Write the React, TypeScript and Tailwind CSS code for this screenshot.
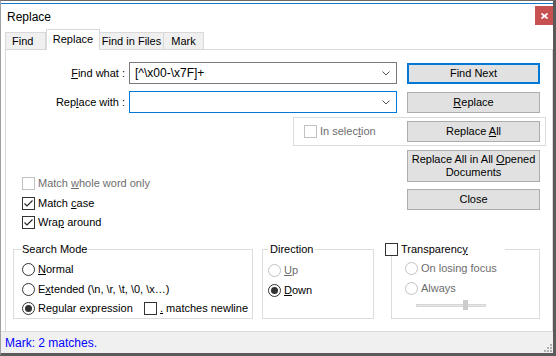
import type { ReactNode } from "react";

function Btn({ children, primary = false, tall = false }: { children: ReactNode; primary?: boolean; tall?: boolean }) {
  return (
    <button
      type="button"
      className={`w-[133px] ${tall ? "h-[32px]" : "h-[21px]"} ${
        primary ? "border-2 border-[#0078d7]" : "border border-[#adadad]"
      } bg-[#e1e1e1] flex items-center justify-center text-center leading-[13px] text-black`}
    >
      <span>{children}</span>
    </button>
  );
}

function Combo({ value = "", focused = false }: { value?: string; focused?: boolean }) {
  return (
    <div
      className={`ml-[4px] w-[268px] h-[22px] border ${
        focused ? "border-[#0078d7]" : "border-[#7a7a7a]"
      } bg-white flex items-center pl-[5px] pr-[6px]`}
    >
      <span className="flex-1 text-[12px] text-black">{value}</span>
      <svg width="8" height="5" viewBox="0 0 8 5">
        <path d="M0.5 0.5 L4 4 L7.5 0.5" fill="none" stroke="#555" strokeWidth="1" />
      </svg>
    </div>
  );
}

function Check({ checked = false, disabled = false, children }: { checked?: boolean; disabled?: boolean; children: ReactNode }) {
  return (
    <span className="flex items-center h-[13px] leading-[13px]">
      <span
        className={`w-[13px] h-[13px] border ${
          disabled ? "border-[#c2c2c2]" : "border-[#333333]"
        } bg-white flex items-center justify-center shrink-0`}
      >
        {checked && (
          <svg width="11" height="11" viewBox="0 0 11 11">
            <path d="M1.5 5.5 L4 8 L9.5 2.5" fill="none" stroke="#222" strokeWidth="1.1" />
          </svg>
        )}
      </span>
      <span className={`ml-[3px] whitespace-nowrap ${disabled ? "text-[#6d6d6d]" : "text-black"}`}>{children}</span>
    </span>
  );
}

function Radio({ checked = false, disabled = false, children }: { checked?: boolean; disabled?: boolean; children: ReactNode }) {
  return (
    <span className="flex items-center h-[13px] leading-[13px]">
      <span
        className={`w-[13px] h-[13px] rounded-full border ${
          disabled ? "border-[#c2c2c2]" : "border-[#333333]"
        } bg-white flex items-center justify-center shrink-0`}
      >
        {checked && <span className="w-[7px] h-[7px] rounded-full bg-[#333333]" />}
      </span>
      <span className={`ml-[3px] whitespace-nowrap ${disabled ? "text-[#6d6d6d]" : "text-black"}`}>{children}</span>
    </span>
  );
}

export default function App() {
  return (
    <div className="w-[556px] h-[356px] flex flex-col bg-white border-t border-l border-t-[#6a6a6a] border-l-[#a0a0a0] border-r-[3px] border-b-[3px] border-r-[#5a5a5a] border-b-[#5a5a5a] font-['Liberation_Sans',Arial,sans-serif] text-[11px] text-black">
      <div className="h-[2px] bg-white" />
      <div className="h-px bg-[#1979ca]" />

      {/* title bar */}
      <div className="h-[25px] flex">
        <span className="flex-1 self-center pl-[6px] text-[12px] leading-[14px]">Replace</span>
        <div className="mt-[2px] w-[18px] h-[19px] bg-[#c75050] flex items-center justify-center">
          <svg width="7" height="6" viewBox="0 0 7 6">
            <path d="M0.5 0.5 L6.5 5.5 M6.5 0.5 L0.5 5.5" stroke="#fff" strokeWidth="1.7" />
          </svg>
        </div>
      </div>

      {/* tabs */}
      <div className="h-[20px] ml-[4px] flex items-end">
        <div className="w-[41px] h-[17px] bg-[#f0f0f0] border border-b-0 border-[#d9d9d9] flex items-center pl-[6px]">Find</div>
        <div className="relative z-10 -mb-px w-[54px] h-[21px] bg-white border border-b-0 border-[#d9d9d9] flex items-center justify-center pb-[2px]">
          Replace
        </div>
        <div className="w-[64px] h-[17px] bg-[#f0f0f0] border border-b-0 border-l-0 border-[#d9d9d9] flex items-center justify-center">
          Find in Files
        </div>
        <div className="w-[40px] h-[17px] bg-[#f0f0f0] border border-b-0 border-l-0 border-[#d9d9d9] flex items-center justify-center">
          Mark
        </div>
      </div>

      {/* panel */}
      <div className="flex-1 ml-[4px] border-t border-l border-r border-[#d9d9d9] leading-[13px]">
        <div className="flex items-center mt-[12px]">
          <span className="w-[119px] text-right">
            <u>F</u>ind what :
          </span>
          <Combo value={"[^\\x00-\\x7F]+"} />
          <div className="ml-[10px]">
            <Btn primary>Find Next</Btn>
          </div>
        </div>

        <div className="flex items-center mt-[7px]">
          <span className="w-[119px] text-right">
            Rep<u>l</u>ace with :
          </span>
          <Combo focused />
          <div className="ml-[10px]">
            <Btn>
              <u>R</u>eplace
            </Btn>
          </div>
        </div>

        <div className="ml-[287px] mt-[4px] w-[253px] h-[29px] border border-[#dcdcdc] flex items-center justify-between pl-[10px] pr-[5px]">
          <Check disabled>
            In selec<u>t</u>ion
          </Check>
          <Btn>
            Replace <u>A</u>ll
          </Btn>
        </div>

        <div className="flex mt-[4px]">
          <div className="w-[401px] pl-[16px] pt-[27px] flex flex-col">
            <Check disabled>
              Match <u>w</u>hole word only
            </Check>
            <div className="mt-[7px]">
              <Check checked>
                Match <u>c</u>ase
              </Check>
            </div>
            <div className="mt-[6px]">
              <Check checked>
                Wra<u>p</u> around
              </Check>
            </div>
          </div>
          <div className="flex flex-col gap-[7px]">
            <Btn tall>
              Replace All in All <u>O</u>pened
              <br />
              Documents
            </Btn>
            <Btn>Close</Btn>
          </div>
        </div>

        <div className="flex items-stretch mt-[14px] pl-[7px]">
          <fieldset className="min-w-0 w-[240px] border border-[#dcdcdc] px-[8px] pt-[7px] pb-[3px]">
            <legend className="-ml-px px-px leading-[13px]">Search Mode</legend>
            <Radio>
              <u>N</u>ormal
            </Radio>
            <div className="mt-[7px]">
              <Radio>
                E<u>x</u>tended (\n, \r, \t, \0, \x…)
              </Radio>
            </div>
            <div className="mt-[6px] flex">
              <div className="w-[122px] shrink-0">
                <Radio checked>
                  Re<u>g</u>ular expression
                </Radio>
              </div>
              <Check>
                <u>.</u> matches newline
              </Check>
            </div>
          </fieldset>

          <fieldset className="min-w-0 ml-[9px] w-[112px] border border-[#dcdcdc] pl-[5px] pt-[8px]">
            <legend className="px-[2px] leading-[13px]">Direction</legend>
            <Radio disabled>
              <u>U</u>p
            </Radio>
            <div className="mt-[7px]">
              <Radio checked>
                <u>D</u>own
              </Radio>
            </div>
          </fieldset>

          <fieldset className="min-w-0 ml-[17px] w-[149px] border border-[#dcdcdc] pl-[13px] pt-[6px]">
            <legend className="-ml-[20px] w-[120px] leading-[13px]">
              <Check>
                Transparenc<u>y</u>
              </Check>
            </legend>
            <Radio disabled>On losing focus</Radio>
            <div className="mt-[7px]">
              <Radio disabled>Always</Radio>
            </div>
            <svg className="mt-[5px] ml-[11px]" width="70" height="10" viewBox="0 0 70 10">
              <rect x="0.5" y="4.5" width="69" height="2" fill="#e7e7e7" stroke="#d6d6d6" />
              <rect x="47" y="0" width="5" height="10" fill="#cccccc" />
            </svg>
          </fieldset>
        </div>
      </div>

      {/* status bar */}
      <div className="h-[22px] border-t border-[#dadada] bg-[#f0f0f0] flex items-center">
        <span className="pl-[4px] text-[12px] text-[#0000ff]">Mark: 2 matches.</span>
        <svg className="ml-auto self-end mb-px mr-px" width="10" height="10" viewBox="0 0 10 10">
          <rect x="8" y="2" width="2" height="2" fill="#b0b0b0" />
          <rect x="5" y="5" width="2" height="2" fill="#b0b0b0" />
          <rect x="8" y="5" width="2" height="2" fill="#b0b0b0" />
          <rect x="2" y="8" width="2" height="2" fill="#b0b0b0" />
          <rect x="5" y="8" width="2" height="2" fill="#b0b0b0" />
          <rect x="8" y="8" width="2" height="2" fill="#b0b0b0" />
        </svg>
      </div>
    </div>
  );
}
